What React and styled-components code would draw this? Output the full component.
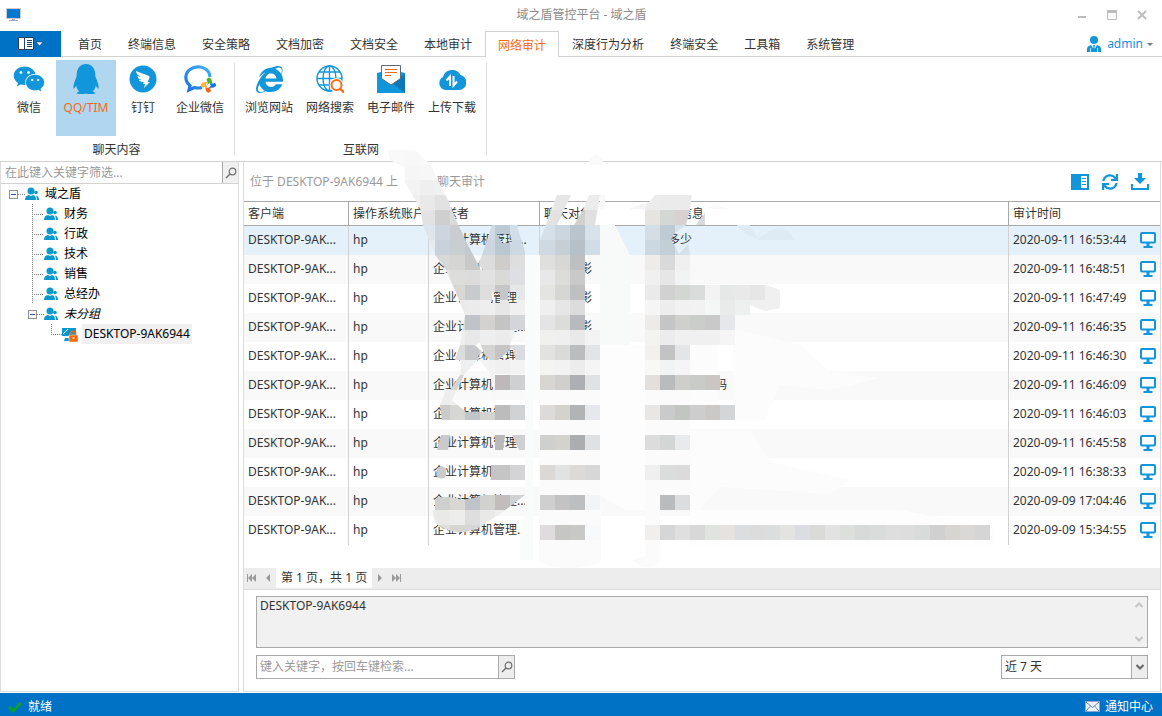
import React from "react";
import styled, { createGlobalStyle } from "styled-components";
import { FaWeixin, FaQq, FaInternetExplorer, FaSync } from "react-icons/fa";

const BLUE = "#1296db";
const ORANGE = "#f76a16";

const tabs = [
  "首页",
  "终端信息",
  "安全策略",
  "文档加密",
  "文档安全",
  "本地审计",
  "网络审计",
  "深度行为分析",
  "终端安全",
  "工具箱",
  "系统管理"
];

const departments = ["财务", "行政", "技术", "销售", "总经办"];

const records = [
  { time: "2020-09-11 16:53:44", message: "多少", indent: 12 },
  { time: "2020-09-11 16:48:51", target: "影" },
  { time: "2020-09-11 16:47:49", target: "影" },
  { time: "2020-09-11 16:46:35", target: "影" },
  { time: "2020-09-11 16:46:30" },
  { time: "2020-09-11 16:46:09", message: "码", indent: 59 },
  { time: "2020-09-11 16:46:03" },
  { time: "2020-09-11 16:45:58" },
  { time: "2020-09-11 16:38:33" },
  { time: "2020-09-09 17:04:46" },
  { time: "2020-09-09 15:34:55" }
];

// Privacy mosaic: 15px cells, each run is [x, y, ...colours]
const CELL = 15;

const solidRuns = [
  [645, 255, "#edecea", "#d9d9d9", "#f0f0f0"],
  [645, 270, "#f0f0f0", "#e6e6e6", "#f2f3f3"],
  [645, 285, "#eaeaea", "#d0d1d0", "#d4d6d4", "#dadcdb", "#f2f3f2", "#e6e8e7", "#e9e9e9", "#e6e6e6"],
  [645, 300, "#f5f5f5", "#ededed", "#f0f1f0", "#f2f2f2", "#f5f6f6", "#e9eaea", "#eeefef"],
  [645, 315, "#ecebea", "#c5c5c5", "#cfcfcd", "#cbcdcb", "#cac9c9", "#e5e7ea"],
  [645, 330, "#f3f3f1", "#ececec", "#f0f0f0", "#f0f0f0", "#f0f0f0", "#f5f5f5"],
  [645, 345, "#f2f1ee", "#c3c3c4", "#e4e5e7"],
  [645, 360, "#f8f8f7", "#f2f3f3", "#f5f5f7"],
  [645, 375, "#e3dfdc", "#babbbd", "#cecfcd", "#c9cbc9", "#cac6c4"],
  [645, 405, "#e8e7e5", "#c9cac9", "#c2c5c2", "#cccdcc", "#cac9c8", "#d3d5d7"],
  [645, 435, "#dcdcdc", "#d4d5d5", "#e9eaec"],
  [645, 465, "#efefef", "#dbdddc", "#dadbda"],
  [660, 495, "#babbbc", "#dcdddf"],
  [540, 315, "#e4e4e4", "#dcdcda", "#b8babd"],
  [540, 330, "#f0f0ef", "#efefef", "#e9e9e9", "#f3f3f4"],
  [540, 345, "#e2e2e0", "#dadad8", "#bbbcbe", "#e2e4e6"],
  [540, 360, "#f4f4f3", "#f2f2f2", "#ececec", "#f5f5f6"],
  [540, 375, "#d7d6d3", "#d0cfcd", "#adafb2", "#e1e2e4"],
  [540, 405, "#dcdbd9", "#d4d2cf", "#b1b3b5", "#e6e8eb"],
  [540, 435, "#cfcfcd", "#d4d2cf", "#abadaf", "#e0e1e3"],
  [540, 465, "#dad9d6", "#e0e3e1", "#dcdad8", "#d6d7d6"],
  [540, 495, "#cfcfd0", "#c3c3c3", "#bcbebf", "#f2f4f6"],
  [540, 525, "#dedcdd", "#c6c6c5", "#c8c8c7", "#f8f9fb"],
  [495, 375, "#bdb8ba", "#cfd0d2"],
  [495, 405, "#bcbcbc", "#d1d2d4"],
  [495, 465, "#c5c5c5", "#d4d4d6"],
  [
    645, 525, "#f0efed", "#d6d6d6", "#dfdfdf", "#d8d8d8", "#e1e3e1", "#e6e2df", "#dcdde0", "#dcdcdd",
    "#dbdedd", "#e3e3e1", "#dcdde0", "#dadad9", "#e2e2e2", "#dddfdd", "#d7dad9", "#d9dcda", "#dedede",
    "#dddddd", "#d8dbd9", "#d0d0d0", "#d6d5d2", "#dad8d6", "#d5d5d5"
  ]
];

// Cells that only show where the brush passed
const brushedRuns = [
  [375, 150, "#f9f9f9", "#f9f9f9", "#f8f8f8", "#f9f9f9"],
  [390, 165, "#f9f9f9", "#f6f6f6", "#f7f7f7", "#f9f9f9"],
  [390, 180, "#f5f5f5", "#f3f3f3", "#efefef", "#f1f1f1"],
  [405, 195, "#f0f0f0", "#e9e9e9", "#e2e2e2", "#eeeeee"],
  [405, 210, "#e9e9e9", "#e2e2e2", "#cfcfd0", "#dadada"],
  [420, 225, "#dde6ec", "#cdd5de", "#c9cdd2", "#d5dbe0", "#d0dae3", "#bccad6", "#d3dfe8"],
  [420, 240, "#e4ecf1", "#c9d1da", "#c9ced1", "#c4c9cf", "#cdd6de", "#b9c7d1", "#ccd9e2"],
  [435, 255, "#d8d8d8", "#d5d5d3", "#c9c9ca", "#dcdcdc", "#cfcdca", "#dededf"],
  [435, 270, "#e4e4e4", "#dddddc", "#dcdcdd", "#e2e2e2", "#d9d9d8", "#dedfe2"],
  [435, 285, "#e4e4e4", "#d8d7d3", "#c9cacc", "#dedede", "#c6c6c7", "#e6e7e9"],
  [450, 300, "#e9e9e9", "#ebebeb", "#eeeeee", "#e7e7e7", "#f0f0f1"],
  [450, 315, "#dededc", "#c0c3c8", "#d4d2d0", "#c4c4c4", "#d4d5d8"],
  [450, 330, "#eeeeed", "#e8e8e8", "#eeeeee", "#ebebeb", "#eff0f1"],
  [450, 345, "#dcdcda", "#c6c8cc", "#d4d4d2", "#c5c5c6", "#dadbdf"],
  [435, 360, "#eeeeee", "#efefee", "#eff0f1", "#f3f3f3", "#f0f0f0", "#f3f3f4"],
  [435, 375, "#d4d4d1", "#d4d4d1", "#f2f2f2", "#f3f3f3", "#bdb8ba"],
  [435, 390, "#ededed", "#efefee", "#f4f4f4", "#f4f4f4", "#f0f0f0", "#f3f3f4"],
  [435, 405, "#cbcbcb", "#d6d6d2", "#c2c4c8", "#d3d3d0"],
  [435, 435, "#cacacc", "#d5d5d5", "#e6e6e6", "#e6e6e6", "#b9b9b9", "#d0d0d3"],
  [435, 465, "#cbcbcd", "#d3d3d5", "#e6e6e6", "#c5c5c5"],
  [435, 495, "#cfcfcf", "#d8d7d3", "#bfc3c8", "#d1d1ce", "#c1bdbd", "#d0d1d3"],
  [420, 510, "#e9e9e7", "#e9e9e7", "#ededec", "#dededf", "#e9e9e8", "#eeeeee", "#f1f1f1"],
  [435, 525, "#dededa", "#d5d6d1", "#d6d6d6", "#e4e4e4"],
  [540, 195, "#ebebeb", "#e6e6e6", "#e6e6e6", "#ececec", "#f4f4f4"],
  [540, 210, "#e3e3e3", "#e1e1e1", "#d3d1d0", "#e0e0e0", "#f3f3f3"],
  [540, 225, "#d6e0e8", "#cbd6df", "#bac4cd", "#d7e2eb"],
  [540, 240, "#cfd9e1", "#c6cfd6", "#b6c0c8", "#d1dde6"],
  [540, 255, "#dfdfde", "#d7d7d5", "#bdbfc1", "#ebebec"],
  [540, 270, "#e8e8e8", "#dcdcdb", "#c9c9c9", "#eeeeef"],
  [540, 285, "#e4e4e3", "#d6d6d4", "#bfc0c1", "#ececed"],
  [540, 300, "#efefef", "#e6e6e6", "#dcdcdc", "#f0f0f0"],
  [645, 195, "#ececec", "#ebebeb", "#ebebeb", "#ebebeb"],
  [645, 210, "#e6e4e1", "#d5d7d5", "#d6d2d2", "#d9dbda", "#d9dbda"],
  [645, 225, "#d3dee6", "#becbd4", "#d4e0ea"],
  [645, 240, "#cbd8e1", "#c3cfd7", "#d5e1ea"]
];

const brushStrokes = [
  "M388 150H415L431 165L435 175L447 198L457 222L468 245L480 268L486 285L492 315L500 330H470L465 315L457 295L445 268L435 255L423 225L420 208L405 182V168L390 160Z",
  "M492 225H517L525 252V330H470L465 315V258L476 268L481 258ZM497 234H510L512 243H502ZM491 292H500V303H491ZM508 292H517V303H508ZM477 262L483 270H478Z",
  "M557 195H571L557 225L574 225L583 210L589 195H600L595 225H600V255H585V315H540V240L548 219Z",
  "M655 195H692L690 210L686 225H645V207Z",
  "M645 225H686L675 233L671 239L679 254L688 244L690 255H645Z",
  "M698 222L705 213V225H696Z",
  "M465 315H525V330H515L510 345H525V360H516L512 348L498 360H490L475 345L468 360H455L460 345ZM471 350L479 342L484 352L476 357Z",
  "M465 325L460 375L450 390H446L440 405L442 420H495V412H466L452 400L464 375L478 360H525V374H495V396L490 374L480 360Z",
  "M441 435H450L448 450H437Z",
  "M495 435H505L503 450H495Z",
  "M512 435H525V450H519Z",
  "M437 469A5 5 0 0 1 446 469V476A5 5 0 0 1 437 476Z",
  "M495 465H491V480H495Z",
  "M436 498Q450 495 462 500Q475 498 485 495H525L500 514L478 528Q458 538 436 524Q430 512 436 498Z"
];

const veils = [
  { d: "M525 255H540V400H533V560H520V540L525 510Z", fill: "#fafbfb" },
  { d: "M600 225H615L630 255V345H600Z", fill: "#f8f9f9" },
  { d: "M539 310H585V345H601V562Q570 574 539 562Z", fill: "#fbfbfb" },
  { d: "M645 226H652V545H645Z", fill: "#fdfdfd" },
  { d: "M645 300H690V495H660V560Q650 575 632 560L645 556Z", fill: "#fbfbfb" },
  { d: "M600 345H645V510H625L600 495Z", fill: "#fdfdfd" },
  { d: "M690 330H717V420H690Z", fill: "#fcfcfc" },
  { d: "M733 330H738L800 345L830 372L880 378L830 390L780 385L765 420H733Z", fill: "#fcfcfc" },
  { d: "M690 430H750L770 462L850 480L830 494L720 487L690 520Z", fill: "#fcfcfc" },
  { d: "M690 510H900L995 528V545H690Z", fill: "#fdfdfd" },
  { d: "M589 160Q595 149 603 160V165H589Z", fill: "#fafafa" },
  { d: "M600 195H605V210H600Z", fill: "#f9f9f9" },
  { d: "M629 209Q645 203 655 200V210Z", fill: "#f5f5f5" },
  { d: "M707 208Q716 203 731 210Z", fill: "#f9f9f9" },
  { d: "M737 225H750L758 239L745 234Z", fill: "#dfebf4" },
  { d: "M757 240Q785 215 794 240Z", fill: "#dfebf4" },
  { d: "M735 285H765L780 290V308L765 311L735 300Z", fill: "#f0f0f1" }
];

const Cells = ({ runs }) =>
  runs.map(([x, y, ...colors]) =>
    colors.map((color, i) => (
      <rect key={`${x}-${y}-${i}`} x={x + i * CELL} y={y} width={CELL} height={CELL} fill={color} />
    ))
  );

const Mosaic = () => (
  <MosaicLayer viewBox="0 0 918 530" shapeRendering="crispEdges" aria-hidden="true">
    <defs>
      <clipPath id="brush">
        {brushStrokes.map(d => (
          <path key={d} d={d} clipRule="evenodd" />
        ))}
      </clipPath>
    </defs>
    <g transform="translate(-244 -162)">
      {veils.map(({ d, fill }) => (
        <path key={d} d={d} fill={fill} />
      ))}
      <g clipPath="url(#brush)">
        <Cells runs={brushedRuns} />
      </g>
      <Cells runs={solidRuns} />
    </g>
  </MosaicLayer>
);

const AppIcon = () => (
  <svg width="16" height="14" viewBox="0 0 16 14">
    <path d="M0 0h15v11H0z" fill="#c9cdd1" />
    <path d="M1 1h13v9H1z" fill="#0078d0" />
    <path d="M6 11h3v1h3v1H3v-1h3z" fill="#a9adb1" />
  </svg>
);

const MenuIcon = () => (
  <svg width="26" height="14" viewBox="0 0 26 14">
    <path d="M.5.5h15v12H.5z" fill="#fff" stroke="#24415e" />
    <path d="M6 1h1v11H6z" fill="#24415e" />
    <path d="M9 3.5h5M9 5.5h5M9 7.5h5M9 9.5h5" stroke="#24415e" />
    <path d="M18 5h7l-3.5 4z" fill="#fff" stroke="#24415e" strokeWidth=".6" />
  </svg>
);

const UserIcon = () => (
  <svg width="14" height="16" viewBox="0 0 14 16" fill={BLUE}>
    <circle cx="7" cy="4" r="4" />
    <path d="M0 16v-3q0-3 4-4l3 5 3-5q4 1 4 4v3z" />
    <path d="M6 9h2l-.5 2 .8 3L7 16l-1.300-2 .8-3z" />
    <path d="M3.500 12v4M10.500 12v4" stroke="#fff" strokeWidth=".7" />
  </svg>
);

const DingIcon = () => (
  <svg width="28" height="28" viewBox="0 0 28 28">
    <circle cx="14" cy="14" r="13.500" fill={BLUE} />
    <path d="M7 6c4 2 9 3 13 5 1 1 .5 2 0 3l-1.500 3h2.300L15 23l1-4h-2l.8-2c-3 .2-4.500-.8-5-2.200l3 .2c-2.500-1-4.300-2-4.300-4l3.500 1C9 10.500 7 8.500 7 6z" fill="#fff" />
  </svg>
);

const WeComIcon = () => (
  <svg width="32" height="28" viewBox="0 0 32 28">
    <defs>
      <linearGradient id="wecom" x1="0" y1="1" x2="1" y2="0">
        <stop offset="0" stopColor="#1b74e0" />
        <stop offset="1" stopColor="#3fb0f5" />
      </linearGradient>
    </defs>
    <path d="M18 22.500Q14 23.500 10.500 22.500L5 25l1-4.500C0 15.500 1 8 6 4.500 12 0 21 1.500 24.500 7q1.500 2.500 1.300 5" fill="none" stroke="url(#wecom)" strokeWidth="3.200" />
    <path d="M25 12.500l3 8-3.500 6-6-6z" fill="#fff" />
    <path d="M22.500 14.500q2.500-4 5 0l1 4.500-3-1-2 2q.5-3-1-5.500z" fill="#4fb52b" />
    <path d="M31 18q2.500 2.500-1 4.500l-4.500.5 1.200-2.500L25.500 18q3 1 5.500 0z" fill="#1675dd" />
    <path d="M27 26q-2.500 3.500-5 0l-.8-4 2.800 1 2.500-1.500q-.6 2.500.5 4.500z" fill="#f4641b" />
    <path d="M18.500 22.500q-3-2.500 0-5l4.500-.5-1 2.500 1.500 3q-2.500-.8-5 0z" fill="#f9b43b" />
  </svg>
);

const GlobeIcon = () => (
  <svg width="28" height="28" viewBox="0 0 28 28" fill="none">
    <g stroke={BLUE} strokeWidth="1.400">
      <circle cx="13.500" cy="13.500" r="12.500" />
      <ellipse cx="13.500" cy="13.500" rx="6.500" ry="12.500" />
      <path d="M13.500 1v25M1 13.500h25M3 7h21M3 20h21" />
    </g>
    <circle cx="20.500" cy="20" r="7" fill="#fff" />
    <circle cx="20.500" cy="20" r="5" stroke={ORANGE} strokeWidth="2" />
    <path d="M24 23.500l4 4" stroke={ORANGE} strokeWidth="2.400" />
  </svg>
);

const MailIcon = () => (
  <svg width="28" height="28" viewBox="0 0 28 28">
    <path d="M0 8l4-1h20l4 1v20H0z" fill={BLUE} />
    <path d="M28 9v19L15 18z" fill="#0b77b8" />
    <path d="M4.500.5h19v13L14 20l-9.500-6.500z" fill="#fff" stroke="#5a6b7c" />
    <path d="M8 4.500h12M8 7.500h12M8 10.500h6" stroke={ORANGE} strokeWidth="1.200" />
  </svg>
);

const CloudIcon = () => (
  <svg width="28" height="28" viewBox="0 0 28 28">
    <path d="M7 25a7 7 0 0 1-2-13 9.500 9.500 0 0 1 17.500-2 7.600 7.600 0 0 1-1.500 15z" fill={BLUE} />
    <path d="M12 21V11.500l-3.500 4M15.500 11v9.500l3.500-4" fill="none" stroke="#fff" strokeWidth="2" />
  </svg>
);

const SearchIcon = () => (
  <svg width="12" height="12" viewBox="0 0 12 12" fill="none" stroke="#6e6e6e">
    <circle cx="7.500" cy="4.500" r="3.300" strokeWidth="1.200" />
    <path d="M5 7L1 11" strokeWidth="1.500" />
  </svg>
);

const PeopleIcon = () => (
  <svg width="14" height="14" viewBox="0 0 14 14" fill="#0a98cf">
    <circle cx="6" cy="4" r="3.500" />
    <path d="M0 13q0-4.500 4-5l2 1 2-1q3 .5 3 5z" />
    <circle cx="11" cy="5.500" r="1.800" />
    <path d="M11 8.500q3 .5 3 4.500h-2.200q.2-3-.8-4.500z" />
  </svg>
);

const LockedPcIcon = () => (
  <svg width="16" height="15" viewBox="0 0 16 15">
    <path d="M0 1h14v8H0z" fill="#0a98cf" />
    <path d="M1 7l5-5" stroke="#fff" strokeWidth="1" />
    <path d="M3 11h5v3H2z" fill="#0a98cf" />
    <path d="M7 8h9v7H7z" fill="#f60" stroke="#fff" strokeWidth=".5" />
    <path d="M9 8V6.500a2.300 2.300 0 0 1 4.600 0V8" fill="none" stroke="#f60" strokeWidth="1.600" />
    <path d="M10.500 11h2" stroke="#fff" strokeWidth="1.400" />
  </svg>
);

const PanelIcon = () => (
  <svg width="18" height="16" viewBox="0 0 18 16">
    <path d="M0 0h18v16H0z" fill={BLUE} />
    <path d="M10 2h6v12h-6z" fill="#fff" />
    <path d="M11 4.500h4M11 7.500h4M11 10.500h4" stroke={BLUE} />
  </svg>
);

const DownloadIcon = () => (
  <svg width="18" height="17" viewBox="0 0 18 17" fill={BLUE}>
    <path d="M7 0h4v5h4l-6 6-6-6h4z" />
    <path d="M0 11h2v4h14v-4h2v6H0z" />
  </svg>
);

const MonitorIcon = () => (
  <svg width="16" height="16" viewBox="0 0 16 16">
    <rect x="1" y="1" width="14" height="9.500" rx="1" fill="#fff" stroke={BLUE} strokeWidth="2" />
    <path d="M6.500 11h3v3h3v2h-9v-2h3z" fill={BLUE} />
  </svg>
);

const ChevronIcon = ({ up, color }) => (
  <svg width="8" height="6" viewBox="0 0 8 6" fill="none" stroke={color} strokeWidth="2">
    <path d={up ? "M.5 5L4 1.500 7.500 5" : "M.5 1L4 4.500 7.500 1"} />
  </svg>
);

const PagerIcon = ({ d }) => (
  <svg width="10" height="8" viewBox="0 0 10 8" fill="#9a9a9a">
    <path d={d} />
  </svg>
);

const chatTools = [
  { label: "微信", icon: <FaWeixin size={32} color={BLUE} /> },
  { label: "QQ/TIM", icon: <FaQq size={30} color={BLUE} />, active: true, wide: true },
  { label: "钉钉", icon: <DingIcon /> },
  { label: "企业微信", icon: <WeComIcon />, wide: true }
];

const netTools = [
  { label: "浏览网站", icon: <FaInternetExplorer size={27} color={BLUE} />, wide: true },
  { label: "网络搜索", icon: <GlobeIcon />, wide: true },
  { label: "电子邮件", icon: <MailIcon />, wide: true },
  { label: "上传下载", icon: <CloudIcon />, wide: true }
];

const RibbonGroup = ({ title, tools, gap }) => (
  <Group>
    <Tools $gap={gap}>
      {tools.map(({ label, icon, active, wide }) => (
        <Tool key={label} type="button" $active={active} $wide={wide}>
          <ToolIcon>{icon}</ToolIcon>
          {label}
        </Tool>
      ))}
    </Tools>
    <GroupTitle>{title}</GroupTitle>
  </Group>
);

const Sidebar = () => (
  <SidePanel>
    <FilterRow>
      <FilterInput type="text" aria-label="筛选" placeholder="在此键入关键字筛选..." />
      <FilterButton type="button" aria-label="筛选">
        <SearchIcon />
      </FilterButton>
    </FilterRow>
    <Tree>
      <Node $level={9}>
        <Expander />
        <Dots $width={7} />
        <PeopleIcon />
        <NodeText>域之盾</NodeText>
      </Node>
      {departments.map(name => (
        <Node key={name} $level={32}>
          <Dots $width={12} $stem="100%" />
          <PeopleIcon />
          <NodeText>{name}</NodeText>
        </Node>
      ))}
      <Node $level={28}>
        <Expander />
        <Dots $width={7} />
        <PeopleIcon />
        <NodeText $italic>未分组</NodeText>
      </Node>
      <Node $level={51}>
        <Dots $width={11} $stem="50%" />
        <LockedPcIcon />
        <NodeText $selected>DESKTOP-9AK6944</NodeText>
      </Node>
    </Tree>
  </SidePanel>
);

const AuditTable = () => (
  <Table>
    <colgroup>
      <Col $width={105} />
      <Col $width={80} />
      <Col $width={111} />
      <Col $width={112} />
      <Col />
      <Col $width={151} />
    </colgroup>
    <thead>
      <tr>
        <Th>客户端</Th>
        <Th>操作系统账户</Th>
        <Th>发送者</Th>
        <Th>聊天对象</Th>
        <Th>聊天信息</Th>
        <Th>审计时间</Th>
      </tr>
    </thead>
    <tbody>
      {records.map(({ time, target, message, indent }, i) => (
        <Row key={time} $selected={i === 0}>
          <Td>DESKTOP-9AK...</Td>
          <Td>hp</Td>
          <Td>企业计算机管理...</Td>
          <Td $indent={36}>{target}</Td>
          <Td $indent={indent}>{message}</Td>
          <Td>
            <TimeCell>
              {time}
              <ScreenButton type="button" aria-label="查看屏幕">
                <MonitorIcon />
              </ScreenButton>
            </TimeCell>
          </Td>
        </Row>
      ))}
    </tbody>
  </Table>
);

const App = () => (
  <Window>
    <GlobalStyle />
    <TitleBar>
      <AppIcon />
      <Title>域之盾管控平台 - 域之盾</Title>
      <WindowButtons>
        <WindowButton type="button" aria-label="最小化">
          <svg width="10" height="10" viewBox="0 0 10 10">
            <path d="M1 6h8v2H1z" fill="#bdbdbd" />
          </svg>
        </WindowButton>
        <WindowButton type="button" aria-label="最大化">
          <svg width="10" height="10" viewBox="0 0 10 10">
            <path d="M.5 1.500h9v8h-9z" fill="none" stroke="#bdbdbd" />
            <path d="M0 0h10v3H0z" fill="#bdbdbd" />
          </svg>
        </WindowButton>
        <WindowButton type="button" aria-label="关闭">
          <svg width="10" height="10" viewBox="0 0 10 10">
            <path d="M1 1l8 8M9 1L1 9" stroke="#bdbdbd" strokeWidth="2" />
          </svg>
        </WindowButton>
      </WindowButtons>
    </TitleBar>

    <TabBar>
      <MenuButton type="button" aria-label="菜单">
        <MenuIcon />
      </MenuButton>
      {tabs.map(tab => (
        <Tab key={tab} type="button" $active={tab === "网络审计"}>
          {tab}
        </Tab>
      ))}
      <UserButton type="button">
        <UserIcon />
        admin
        <Caret />
      </UserButton>
    </TabBar>

    <Ribbon>
      <RibbonGroup title="聊天内容" tools={chatTools} gap={0} />
      <RibbonGroup title="互联网" tools={netTools} gap={1} />
    </Ribbon>

    <Body>
      <Sidebar />
      <Content>
        <ContentHeader>
          <Crumb>
            <span>位于 DESKTOP-9AK6944 上</span>
            <span>聊天审计</span>
          </Crumb>
          <Actions>
            <IconButton type="button" aria-label="面板">
              <PanelIcon />
            </IconButton>
            <IconButton type="button" aria-label="刷新">
              <FaSync size={16} color={BLUE} />
            </IconButton>
            <IconButton type="button" aria-label="导出">
              <DownloadIcon />
            </IconButton>
          </Actions>
        </ContentHeader>
        <TableArea>
          <AuditTable />
        </TableArea>
        <Pager>
          <PagerButton type="button" aria-label="首页">
            <PagerIcon d="M0 0h1v8H0zM1 4l4-4v8zM5 4l4-4v8z" />
          </PagerButton>
          <PagerButton type="button" aria-label="上一页">
            <PagerIcon d="M3 4l4-4v8z" />
          </PagerButton>
          <PageInfo>第 1 页，共 1 页</PageInfo>
          <PagerButton type="button" aria-label="下一页">
            <PagerIcon d="M7 4L3 0v8z" />
          </PagerButton>
          <PagerButton type="button" aria-label="末页">
            <PagerIcon d="M10 0H9v8h1zM9 4L5 0v8zM5 4L1 0v8z" />
          </PagerButton>
        </Pager>
        <Footer>
          <DetailBox>
            <Detail aria-label="详情" readOnly value="DESKTOP-9AK6944" />
            <ScrollTrack>
              <ChevronIcon up color="#c4c4c4" />
              <ChevronIcon color="#c4c4c4" />
            </ScrollTrack>
          </DetailBox>
          <SearchRow>
            <SearchBox>
              <SearchInput type="text" aria-label="检索" placeholder="键入关键字，按回车键检索..." />
              <SearchButton type="button" aria-label="检索">
                <SearchIcon />
              </SearchButton>
            </SearchBox>
            <RangeBox>
              <Range aria-label="时间范围" defaultValue="7">
                <option value="7">近 7 天</option>
                <option value="30">近 30 天</option>
              </Range>
              <RangeArrow>
                <ChevronIcon color="#666" />
              </RangeArrow>
            </RangeBox>
          </SearchRow>
        </Footer>
        <Mosaic />
      </Content>
    </Body>

    <StatusBar>
      <StatusItem>
        <svg width="15" height="12" viewBox="0 0 15 12">
          <path d="M1 6l4 4 8-8" fill="none" stroke="#0ca12a" strokeWidth="3" />
        </svg>
        就绪
      </StatusItem>
      <StatusItem>
        <svg width="15" height="11" viewBox="0 0 15 11">
          <path d="M.5.5h14v10H.5z" fill="#eef2fb" stroke="#8fa3cc" />
          <path d="M1 1l6.500 5.500L14 1M1 10l4.500-5M14 10L9.500 5" fill="none" stroke="#4a68a8" strokeWidth=".8" />
        </svg>
        通知中心
      </StatusItem>
    </StatusBar>
  </Window>
);

export default App;

const GlobalStyle = createGlobalStyle`
  * {
    box-sizing: border-box;
  }

  body {
    margin: 0;
  }

  body, button, input, textarea, select {
    font-family: "Noto Sans", "Noto Sans CJK SC", sans-serif;
    font-size: 12px;
    line-height: 16px;
    color: #333;
  }

  button {
    padding: 0;
    border: 0;
    background: none;
  }

  svg {
    display: block;
    flex: none;
  }
`;

const Window = styled.div`
  display: flex;
  flex-direction: column;
  min-height: 100vh;
  background: #fff;
`;

const TitleBar = styled.header`
  display: grid;
  grid-template-columns: 90px 1fr 90px;
  align-items: center;
  height: 31px;
  padding: 0 5px 2px 6px;
`;

const Title = styled.span`
  text-align: center;
  color: #8c8c8c;
`;

const WindowButtons = styled.div`
  display: flex;
  justify-content: flex-end;
`;

const WindowButton = styled.button`
  display: flex;
  justify-content: center;
  width: 30px;
`;

const TabBar = styled.nav`
  display: flex;
  height: 26px;
  box-shadow: inset 0 -1px #d2d2d2;
`;

const MenuButton = styled.button`
  display: flex;
  align-items: center;
  justify-content: center;
  width: 61px;
  margin-right: 4px;
  background: #0072c6;
`;

const Tab = styled.button`
  padding: 2px ${props => (props.$active ? 12 : 13)}px 0;
  color: ${props => (props.$active ? ORANGE : "#333")};
  background: ${props => (props.$active ? "#fff" : "none")};
  border: ${props => (props.$active ? "1px solid #d2d2d2" : "0")};
  border-bottom: 0;
`;

const UserButton = styled.button`
  display: flex;
  align-items: center;
  gap: 6px;
  margin-left: auto;
  padding-right: 9px;
  color: #2090ea;
`;

const Caret = styled.i`
  border: 3px solid transparent;
  border-top-color: #777;
  border-bottom: 0;
  margin-left: -2px;
`;

const Ribbon = styled.div`
  display: flex;
  border-bottom: 1px solid #d2d2d2;
`;

const Group = styled.section`
  display: flex;
  flex-direction: column;
  justify-content: space-between;
  height: 104px;
  padding: 3px 4px 3px 2px;
  background: linear-gradient(#dcdcdc, #dcdcdc) right 6px / 1px 92px no-repeat;

  & + & {
    padding-left: 4px;
  }
`;

const Tools = styled.div`
  display: flex;
  gap: ${props => props.$gap}px;
  padding-right: 1px;
`;

const Tool = styled.button`
  display: flex;
  flex-direction: column;
  align-items: center;
  width: ${props => (props.$wide ? 60 : 54)}px;
  height: 76px;
  padding-top: 3px;
  gap: 5px;
  background: ${props => (props.$active ? "#b1d6f0" : "none")};
  color: ${props => (props.$active ? ORANGE : "#333")};
`;

const ToolIcon = styled.span`
  display: flex;
  align-items: center;
  height: 32px;
`;

const GroupTitle = styled.div`
  text-align: center;
`;

const Body = styled.main`
  display: flex;
  flex: 1;
  gap: 4px;
  padding: 0 1px 1px 0;
`;

const SidePanel = styled.aside`
  flex: 0 0 239px;
  border: 1px solid #dcdcdc;
  border-top: 0;
`;

const FilterRow = styled.div`
  display: flex;
  height: 22px;
  border-bottom: 1px solid #d2d2d2;
`;

const FilterInput = styled.input`
  flex: 1;
  min-width: 0;
  padding: 0 4px;
  border: 0;
  outline: 0;

  &::placeholder {
    color: #999;
  }
`;

const FilterButton = styled.button`
  display: flex;
  align-items: center;
  justify-content: center;
  width: 16px;
  border-left: 1px solid #ababab;
  background: #f0f0f0;
`;

const Tree = styled.ul`
  margin: 0;
  padding: 0;
  list-style: none;
`;

const Node = styled.li`
  display: flex;
  align-items: center;
  height: 20px;
  padding-left: ${props => props.$level - 1}px;
`;

const Expander = styled.span`
  width: 9px;
  height: 9px;
  border: 1px solid #919191;
  background: linear-gradient(#35549c, #35549c) center / 5px 1px no-repeat #f6f6f6;
`;

const Dots = styled.span`
  width: ${props => props.$width}px;
  height: 20px;
  background:
    repeating-linear-gradient(#808080 0 1px, transparent 1px 2px) 0 0 / 1px ${props => props.$stem || "0"} no-repeat,
    repeating-linear-gradient(90deg, #808080 0 1px, transparent 1px 2px) 0 10px / 100% 1px no-repeat;
`;

const NodeText = styled.span`
  margin-left: 4px;
  padding: 2px;
  color: #000;
  font-style: ${props => (props.$italic ? "italic" : "normal")};
  background: ${props => (props.$selected ? "#f0f0f0" : "none")};
`;

const Content = styled.section`
  position: relative;
  display: flex;
  flex-direction: column;
  flex: 1;
  min-width: 0;
  border: 1px solid #dcdcdc;
  border-top: 0;
`;

const ContentHeader = styled.div`
  display: flex;
  align-items: center;
  justify-content: space-between;
  height: 39px;
  padding: 0 11px 0 6px;
`;

const Crumb = styled.div`
  display: flex;
  gap: 39px;
  color: #999;
`;

const Actions = styled.div`
  display: flex;
  gap: 12px;
`;

const IconButton = styled.button`
  display: flex;
  align-items: center;
  justify-content: center;
  width: 18px;
  height: 18px;
`;

const TableArea = styled.div`
  flex: 1;
`;

const Table = styled.table`
  width: 100%;
  table-layout: fixed;
  border-spacing: 0;
`;

const Col = styled.col`
  width: ${props => (props.$width ? `${props.$width}px` : "auto")};
`;

const Th = styled.th`
  height: 25px;
  padding: 0 0 0 4px;
  border: solid #a9a9a9;
  border-width: 1px 1px 1px 0;
  font-weight: 400;
  text-align: left;
  white-space: nowrap;

  &:last-child {
    border-right: 0;
  }
`;

const Td = styled.td`
  height: 29px;
  padding: 0 4px 2px;
  padding-left: ${props => 4 + (props.$indent || 0)}px;
  border-right: 1px solid #d2d2d2;
  white-space: nowrap;

  &:last-child {
    border-right: 0;
  }
`;

const Row = styled.tr`
  background: ${props => (props.$selected ? "#e4f1fb" : "#fff")};

  &:nth-child(even) {
    background: #f9f9f9;
  }
`;

const TimeCell = styled.div`
  display: flex;
  align-items: center;
  justify-content: space-between;
`;

const ScreenButton = styled.button`
  display: flex;
`;

const Pager = styled.div`
  display: flex;
  height: 22px;
  padding-bottom: 1px;
  background: #ededed;
  border-bottom: 1px solid #dcdcdc;
`;

const PagerButton = styled.button`
  display: flex;
  align-items: center;
  justify-content: center;
  width: 16px;
`;

const PageInfo = styled.span`
  padding: 2px 5px;
  background: #fff;
`;

const Footer = styled.div`
  padding: 6px 12px 12px;
`;

const DetailBox = styled.div`
  display: flex;
  height: 52px;
  border: 1px solid #a9a9a9;
  background: #f1f1f1;
`;

const Detail = styled.textarea`
  flex: 1;
  padding: 1px 3px;
  border: 0;
  outline: 0;
  resize: none;
  background: none;
`;

const ScrollTrack = styled.div`
  display: flex;
  flex-direction: column;
  align-items: center;
  justify-content: space-between;
  width: 17px;
  padding: 5px 0;
`;

const SearchRow = styled.div`
  display: flex;
  justify-content: space-between;
  margin-top: 7px;
`;

const SearchBox = styled.div`
  display: flex;
  flex: 0 0 259px;
  height: 24px;
  border: 1px solid #a9a9a9;
`;

const SearchInput = styled(FilterInput)`
  padding: 0 3px;
`;

const SearchButton = styled(FilterButton)`
  background: #ededed;
`;

const RangeBox = styled.div`
  position: relative;
  width: 147px;
  height: 24px;
  border: 1px solid #a9a9a9;
`;

const Range = styled.select`
  width: 100%;
  height: 100%;
  padding: 0 20px 0 3px;
  border: 0;
  outline: 0;
  appearance: none;
  background: #fff;
`;

const RangeArrow = styled.span`
  position: absolute;
  top: 0;
  right: 0;
  bottom: 0;
  display: flex;
  align-items: center;
  justify-content: center;
  width: 16px;
  border-left: 1px solid #a9a9a9;
  background: #ededed;
  pointer-events: none;
`;

const MosaicLayer = styled.svg`
  position: absolute;
  top: 0;
  left: 0;
  width: 918px;
  height: 530px;
  overflow: visible;
  pointer-events: none;
`;

const StatusBar = styled.footer`
  display: flex;
  align-items: center;
  justify-content: space-between;
  height: 23px;
  padding: 4px 9px 0 8px;
  background: #0072c6;
`;

const StatusItem = styled.span`
  display: flex;
  align-items: center;
  gap: 5px;
  color: #fff;
`;
